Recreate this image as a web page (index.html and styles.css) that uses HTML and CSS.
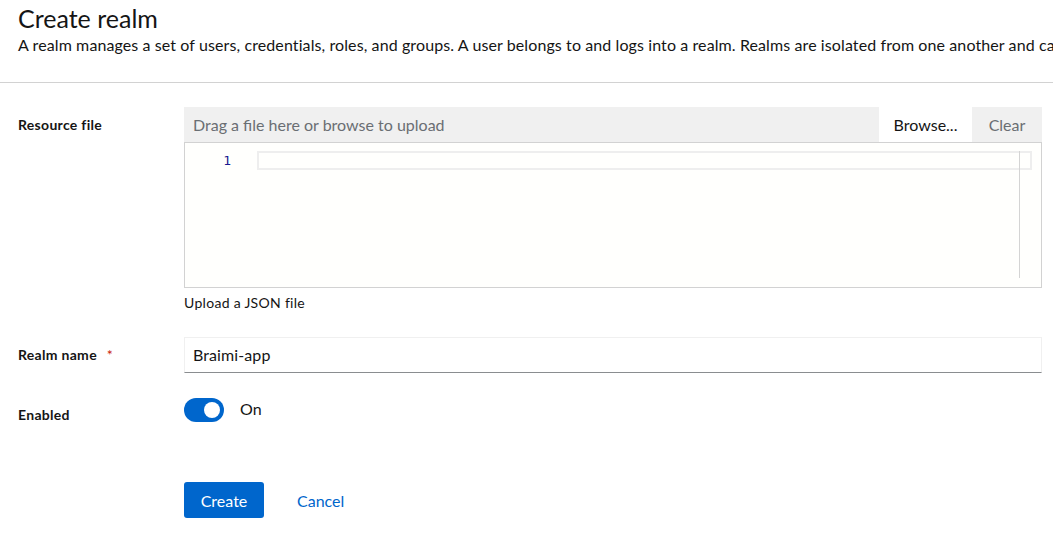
FILE: index.html
```html
<!DOCTYPE html>
<html>
<head>
<meta charset="utf-8">
<link rel="stylesheet" href="styles.css">
</head>
<body>
<header class="page-header">
  <h1 class="title">Create realm</h1>
  <p class="desc">A realm manages a set of users, credentials, roles, and groups. A user belongs to and logs into a realm. Realms are isolated from one another and can only manage and authenticate the users that they control.</p>
</header>
<main class="form">
  <div class="row row-file">
    <label class="label">Resource file</label>
    <div class="control">
      <div class="upload">
        <div class="upload-bar">
          <div class="upload-text">Drag a file here or browse to upload</div>
          <button class="btn-browse">Browse...</button>
          <button class="btn-clear">Clear</button>
        </div>
        <div class="editor">
          <div class="gutter">1</div>
          <div class="code">
            <div class="current-line"></div>
          </div>
          <div class="ruler"></div>
        </div>
      </div>
      <div class="helper">Upload a JSON file</div>
    </div>
  </div>
  <div class="row row-name">
    <label class="label">Realm name <span class="req">*</span></label>
    <div class="control">
      <div class="input">Braimi-app</div>
    </div>
  </div>
  <div class="row row-enabled">
    <label class="label">Enabled</label>
    <div class="control switch-wrap">
      <span class="switch"><span class="knob"></span></span>
      <span class="switch-label">On</span>
    </div>
  </div>
  <div class="row row-actions">
    <div class="label"></div>
    <div class="control actions">
      <button class="btn-primary">Create</button>
      <button class="btn-link">Cancel</button>
    </div>
  </div>
</main>
</body>
</html>
```
FILE: styles.css
```css
* { box-sizing: border-box; }
html, body { margin: 0; padding: 0; }
body {
  font-family: "Lato", "Open Sans", sans-serif;
  color: #151515;
  background: #fff;
  width: 1053px;
  overflow: hidden;
}
.page-header {
  padding: 2px 18px 0 18px;
  height: 83px;
  border-bottom: 1px solid #d2d2d2;
  white-space: nowrap;
  overflow: hidden;
}
.title {
  margin: 0;
  font-size: 25px;
  font-weight: 400;
  line-height: 32px;
}
.desc {
  margin: -1px 0 0 0;
  font-size: 16px;
  line-height: 24px;
  letter-spacing: 0.1px;
}
.form {
  padding: 24px 11px 0 18px;
}
.row {
  display: flex;
}
.label {
  width: 166px;
  flex: none;
  font-size: 14px;
  font-weight: 700;
  line-height: 20px;
  letter-spacing: 0.3px;
}
.control {
  flex: 1;
}
.row-file .label { padding-top: 8px; }
.upload-bar {
  display: flex;
  height: 35px;
  background: #f0f0f0;
}
.upload-text {
  flex: 1;
  padding: 0 9px;
  line-height: 36px;
  font-size: 16px;
  color: #6a6e73;
}
.upload-bar button {
  font-family: inherit;
  font-size: 16px;
  border: 0;
  padding: 0;
  cursor: pointer;
}
.btn-browse {
  width: 93px;
  background: #fff;
  color: #151515;
}
.btn-clear {
  width: 70px;
  background: #f0f0f0;
  color: #6a6e73;
}
.editor {
  position: relative;
  display: flex;
  height: 146px;
  border: 1px solid #d2d2d2;
  background: #fffffd;
  padding-top: 8px;
}
.gutter {
  width: 72px;
  flex: none;
  text-align: right;
  padding-right: 26px;
  font-family: "DejaVu Sans Mono", "Liberation Mono", monospace;
  font-size: 13px;
  line-height: 19px;
  color: #1a1a8f;
}
.code {
  flex: 1;
  padding-right: 9px;
}
.current-line {
  height: 19px;
  border: 2px solid #eeeeee;
}
.ruler {
  position: absolute;
  left: 834px;
  top: 8px;
  width: 1px;
  height: 127px;
  background: #d4d4d4;
}
.helper {
  margin-top: 6px;
  font-size: 14px;
  line-height: 18px;
  letter-spacing: 0.3px;
}
.row-name { margin-top: 25px; }
.row-name .label { padding-top: 8px; }
.req {
  color: #c9190b;
  margin-left: 6px;
  font-weight: 400;
}
.input {
  height: 36px;
  border: 1px solid #f0f0f0;
  border-bottom: 1px solid #8a8d90;
  padding: 0 8px;
  font-size: 16px;
  line-height: 34px;
  letter-spacing: 0.1px;
}
.row-enabled { margin-top: 25px; }
.row-enabled .label { padding-top: 7px; }
.switch-wrap {
  display: flex;
  align-items: flex-start;
}
.switch {
  position: relative;
  width: 40px;
  height: 24px;
  border-radius: 12px;
  background: #0066cc;
  flex: none;
}
.knob {
  position: absolute;
  right: 4px;
  top: 4px;
  width: 16px;
  height: 16px;
  border-radius: 50%;
  background: #fff;
}
.switch-label {
  margin-left: 16px;
  font-size: 16px;
  line-height: 24px;
  margin-top: -1px;
}
.row-actions { margin-top: 57px; }
.actions {
  display: flex;
  align-items: center;
}
.btn-primary {
  font-family: inherit;
  font-size: 16px;
  height: 36px;
  width: 80px;
  background: #0066cc;
  color: #fff;
  border: 0;
  border-radius: 3px;
  padding: 0;
}
.btn-link {
  font-family: inherit;
  font-size: 16px;
  background: none;
  border: 0;
  color: #0066cc;
  margin-left: 17px;
  padding: 0 16px;
  height: 36px;
}
```
